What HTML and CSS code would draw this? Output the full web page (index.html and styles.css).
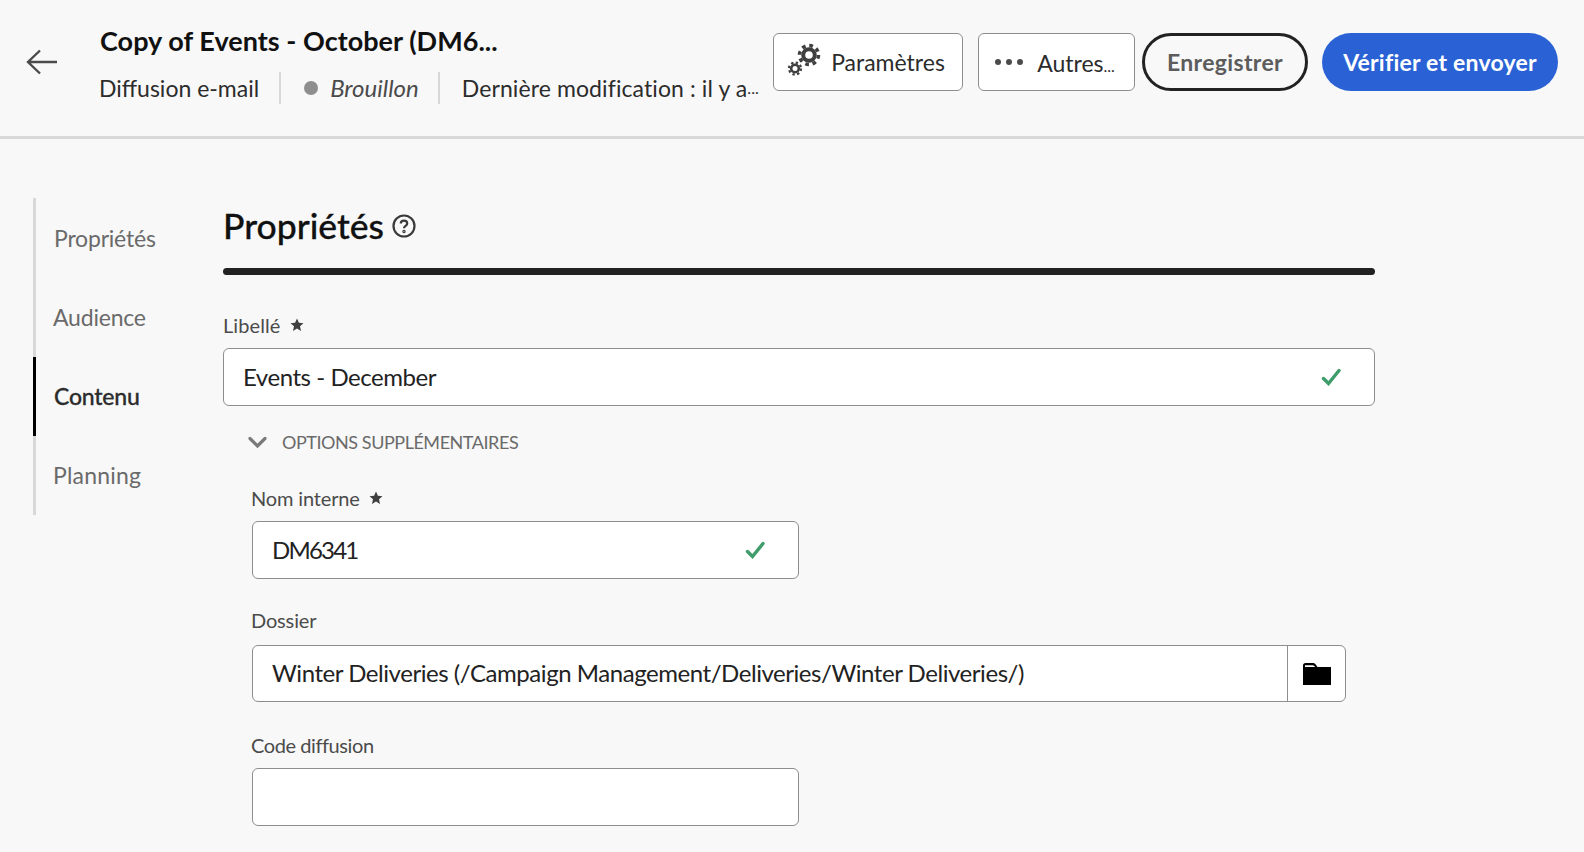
FILE: index.html
```html
<!DOCTYPE html>
<html lang="fr">

<head>
    <meta charset="UTF-8">
    <meta name="viewport" content="width=device-width, initial-scale=1.0">
    <title>Copy of Events - October</title>
    <link rel="stylesheet" href="styles.css">
</head>

<body>
    <header class="top-bar">
        <button class="back-btn" aria-label="Retour">
            <svg width="32" height="26" viewBox="0 0 32 26" fill="none" stroke="#4b4b4b" stroke-width="2.4">
                <path d="M31 13H2M14 1.5 2 13l12 11.5" />
            </svg>
        </button>
        <div class="title-block">
            <h1 class="title">Copy of Events - October (DM6...</h1>
            <div class="meta">
                <span class="meta-item meta-type">Diffusion e-mail</span>
                <span class="meta-item meta-status"><span class="dot"></span><em>Brouillon</em></span>
                <span class="meta-item meta-date">Dernière modification : il y a<span class="small-dots">...</span></span>
            </div>
        </div>
        <div class="actions">
            <button class="btn btn-params">
                <svg class="gears" width="33" height="33" viewBox="0 0 33 33" fill="none" stroke="#3f3f3f">
                    <circle cx="21" cy="12" r="5.800" stroke-width="4" />
                    <circle cx="21" cy="12" r="9.500" stroke-width="3.500" stroke-dasharray="3.700 3.760" />
                    <circle cx="7" cy="25.500" r="3.800" stroke-width="2.600" />
                    <circle cx="7" cy="25.500" r="6" stroke-width="2.200" stroke-dasharray="2.400 2.310" />
                </svg>
                Paramètres
            </button>
            <button class="btn btn-more">
                <span class="more-dots"><i></i><i></i><i></i></span>
                <span class="more-text">Autres<span class="small-dots">...</span></span>
            </button>
            <button class="btn btn-save">Enregistrer</button>
            <button class="btn btn-send">Vérifier et envoyer</button>
        </div>
    </header>

    <div class="page">
        <nav class="side-nav">
            <a class="nav-item nav-first">Propriétés</a>
            <a class="nav-item">Audience</a>
            <a class="nav-item nav-first active">Contenu</a>
            <a class="nav-item nav-planning">Planning</a>
        </nav>

        <main class="form">
            <div class="section-head">
                <h2>Propriétés</h2>
                <svg width="24" height="24" viewBox="0 0 24 24" fill="none" stroke="#3a3a3a" stroke-width="2.200">
                    <circle cx="12" cy="12" r="10.500" />
                    <path d="M8.800 9.600c0-1.800 1.400-3 3.200-3s3.200 1.100 3.200 2.800c0 2.500-3.200 2.400-3.200 4.900" />
                    <circle cx="12" cy="17.500" r=".6" />
                </svg>
            </div>
            <div class="section-rule"></div>

            <label class="field-label label-first">Libellé
                <svg class="star" width="14" height="14" viewBox="0 0 14 14" fill="#3f3f3f">
                    <path d="M7 .5 8.900 4.800 13.500 5.200 10 8.300 11 13 7 10.600 3 13 4 8.300 .5 5.200 5.100 4.800z" />
                </svg>
            </label>
            <div class="field">
                <span class="field-value">Events - December</span>
                <svg class="check" width="20" height="18" viewBox="0 0 20 18" fill="none" stroke="#3f9c6b" stroke-width="3.400" stroke-linecap="round">
                    <path d="M2.500 10.500 7.500 15.500 18 2.500" />
                </svg>
            </div>

            <div class="options-toggle">
                <svg width="19" height="12" viewBox="0 0 19 12" fill="none" stroke="#7a7a7a" stroke-width="3.200" stroke-linecap="round">
                    <path d="M2 2.500 9.500 10 17 2.500" />
                </svg>
                <span>Options supplémentaires</span>
            </div>

            <div class="sub-fields">
                <label class="field-label label-nom">Nom interne
                    <svg class="star" width="14" height="14" viewBox="0 0 14 14" fill="#3f3f3f">
                        <path d="M7 .5 8.900 4.800 13.500 5.200 10 8.300 11 13 7 10.600 3 13 4 8.300 .5 5.200 5.100 4.800z" />
                    </svg>
                </label>
                <div class="field field-short">
                    <span class="field-value value-digits">DM6341</span>
                    <svg class="check" width="20" height="18" viewBox="0 0 20 18" fill="none" stroke="#3f9c6b" stroke-width="3.400" stroke-linecap="round">
                        <path d="M2.500 10.500 7.500 15.500 18 2.500" />
                    </svg>
                </div>

                <label class="field-label label-dossier">Dossier</label>
                <div class="field field-folder">
                    <span class="field-value">Winter Deliveries (/Campaign Management/Deliveries/Winter Deliveries/)</span>
                    <span class="folder-btn">
                        <svg width="30" height="24" viewBox="0 0 30 24" fill="#000">
                            <path d="M1 3.500C1 2 2 1 3.500 1h7.500c1 0 1.700.4 2.300 1.100L15.500 5H29v18H1z" />
                            <path d="M3 3.200h7.800c.6 0 1 .2 1.400.7L13.300 5H3z" fill="#fff" />
                        </svg>
                    </span>
                </div>

                <label class="field-label label-code">Code diffusion</label>
                <div class="field field-short"></div>
            </div>
        </main>
    </div>
</body>

</html>
```

FILE: styles.css
```css
* {
    box-sizing: border-box;
}

body {
    font-family: Lato, "Open Sans", sans-serif;
    background-color: #f8f8f8;
    color: #2c2c2c;
    margin: 0;
    height: 852px;
    overflow: hidden;
}

.top-bar {
    display: flex;
    height: 139px;
    border-bottom: 3px solid #d8d8d8;
    padding: 33px 26px 0 26px;
}

.back-btn {
    background: none;
    border: none;
    padding: 4px 0 0 0;
    height: 57px;
    width: 74px;
    text-align: left;
    flex-shrink: 0;
}

.title-block {
    width: 673px;
    flex-shrink: 0;
}

.title {
    font-size: 27px;
    font-weight: 700;
    line-height: 34px;
    letter-spacing: .03px;
    margin: -9px 0 0 0;
    color: #111;
    white-space: nowrap;
}

.meta {
    display: flex;
    margin: 14px 0 0 -1px;
    font-size: 23px;
    line-height: 32px;
    white-space: nowrap;
}

.meta-item {
    display: flex;
    align-items: center;
    padding-right: 20px;
    margin-right: 22px;
    border-right: 2px solid #d8d8d8;
}

.meta-type {
    margin-right: 23px;
}

.meta-status {
    padding-right: 19px;
}

.meta-date {
    border-right: none;
    padding-right: 0;
    margin-right: 0;
    letter-spacing: .1px;
}

.meta-status em {
    color: #4b4b4b;
    font-size: 24px;
}

.dot {
    width: 14px;
    height: 14px;
    border-radius: 50%;
    background: #8e8e8e;
    margin-right: 12px;
}

.small-dots {
    font-size: 16px;
}

.actions {
    display: flex;
    height: 58px;
}

.btn {
    font-family: inherit;
    font-size: 23px;
    height: 58px;
    padding: 0;
    display: flex;
    align-items: center;
    justify-content: center;
    white-space: nowrap;
}

.btn-params,
.btn-more {
    background: #fff;
    border: 1px solid #8e8e8e;
    border-radius: 6px;
    color: #2c2c2c;
}

.btn-params {
    width: 190px;
    gap: 8px;
    margin-right: 15px;
    padding-right: 1px;
}

.gears {
    margin: -6px 2px 0 -2px;
}

.btn-more {
    width: 157px;
    gap: 14px;
    margin-right: 7px;
    padding-right: 3px;
}

.more-text {
    margin-top: 2px;
}

.more-dots {
    display: flex;
    gap: 5px;
}

.more-dots i {
    width: 6px;
    height: 6px;
    border-radius: 50%;
    background: #4b4b4b;
}

.btn-save {
    width: 166px;
    background: none;
    border: 3px solid #222;
    border-radius: 29px;
    color: #5c5c5c;
    font-weight: 700;
    letter-spacing: .35px;
    margin-right: 14px;
}

.btn-send {
    width: 236px;
    background: #2a62d6;
    border: none;
    border-radius: 29px;
    color: #fff;
    font-weight: 700;
    letter-spacing: .22px;
}

.page {
    display: flex;
    padding: 59px 0 0 33px;
}

.side-nav {
    width: 190px;
    height: 317px;
    flex-shrink: 0;
    border-left: 3px solid #d8d8d8;
    font-size: 23px;
    letter-spacing: -.2px;
}

.nav-item {
    display: flex;
    align-items: center;
    height: 79.250px;
    margin-left: -3px;
    padding-left: 17px;
    border-left: 3px solid transparent;
    color: #6a6a6a;
}

.nav-first {
    padding-left: 18px;
}

.nav-planning {
    letter-spacing: .2px;
}

.nav-item.active {
    border-left-color: #000;
    color: #2c2c2c;
    font-weight: 500;
    -webkit-text-stroke: .3px #2c2c2c;
}

.form {
    width: 1152px;
}

.section-head {
    display: flex;
    align-items: center;
    gap: 8px;
    height: 54px;
}

.section-head svg {
    margin-top: 2px;
}

.section-head h2 {
    font-size: 35.500px;
    font-weight: 500;
    margin: 0;
    color: #111;
    -webkit-text-stroke: .3px #111;
}

.section-rule {
    height: 7px;
    margin-top: 16px;
    border-radius: 4px;
    background: #222;
}

.field-label {
    display: flex;
    align-items: center;
    font-size: 20px;
    line-height: 26px;
    letter-spacing: -.15px;
    color: #4b4b4b;
}

.label-first {
    margin-top: 37px;
    margin-bottom: 10px;
    letter-spacing: .1px;
}

.star {
    margin-left: 9px;
}

.field {
    display: flex;
    align-items: center;
    justify-content: space-between;
    height: 58px;
    background: #fff;
    border: 1px solid #8e8e8e;
    border-radius: 6px;
    padding: 0 33px 0 20px;
    font-size: 24px;
    letter-spacing: -.45px;
    color: #222;
}

.field-value {
    margin: -2px 0 0 -1px;
}

.value-digits {
    letter-spacing: -1.800px;
}

.check {
    margin-top: -1px;
}

.options-toggle {
    display: flex;
    align-items: center;
    gap: 15px;
    margin: 25px 0 0 25px;
    height: 22px;
    font-size: 18px;
    letter-spacing: -.45px;
    color: #6a6a6a;
    text-transform: uppercase;
}

.sub-fields {
    padding-left: 29px;
}

.sub-fields .field-label {
    margin-left: -1px;
}

.label-nom {
    margin-top: 32px;
    margin-bottom: 10px;
}

.label-dossier {
    margin-top: 28px;
    margin-bottom: 12px;
}

.label-code {
    margin-top: 30px;
    margin-bottom: 10px;
    letter-spacing: -.42px;
}

.field-short {
    width: 547px;
}

.field-folder {
    width: 1094px;
    height: 57px;
    padding-right: 0;
    overflow: hidden;
}

.field-folder .field-value {
    margin-top: -3px;
}

.folder-btn {
    display: flex;
    align-items: center;
    justify-content: center;
    width: 58px;
    height: 100%;
    border-left: 1px solid #8e8e8e;
}
```
